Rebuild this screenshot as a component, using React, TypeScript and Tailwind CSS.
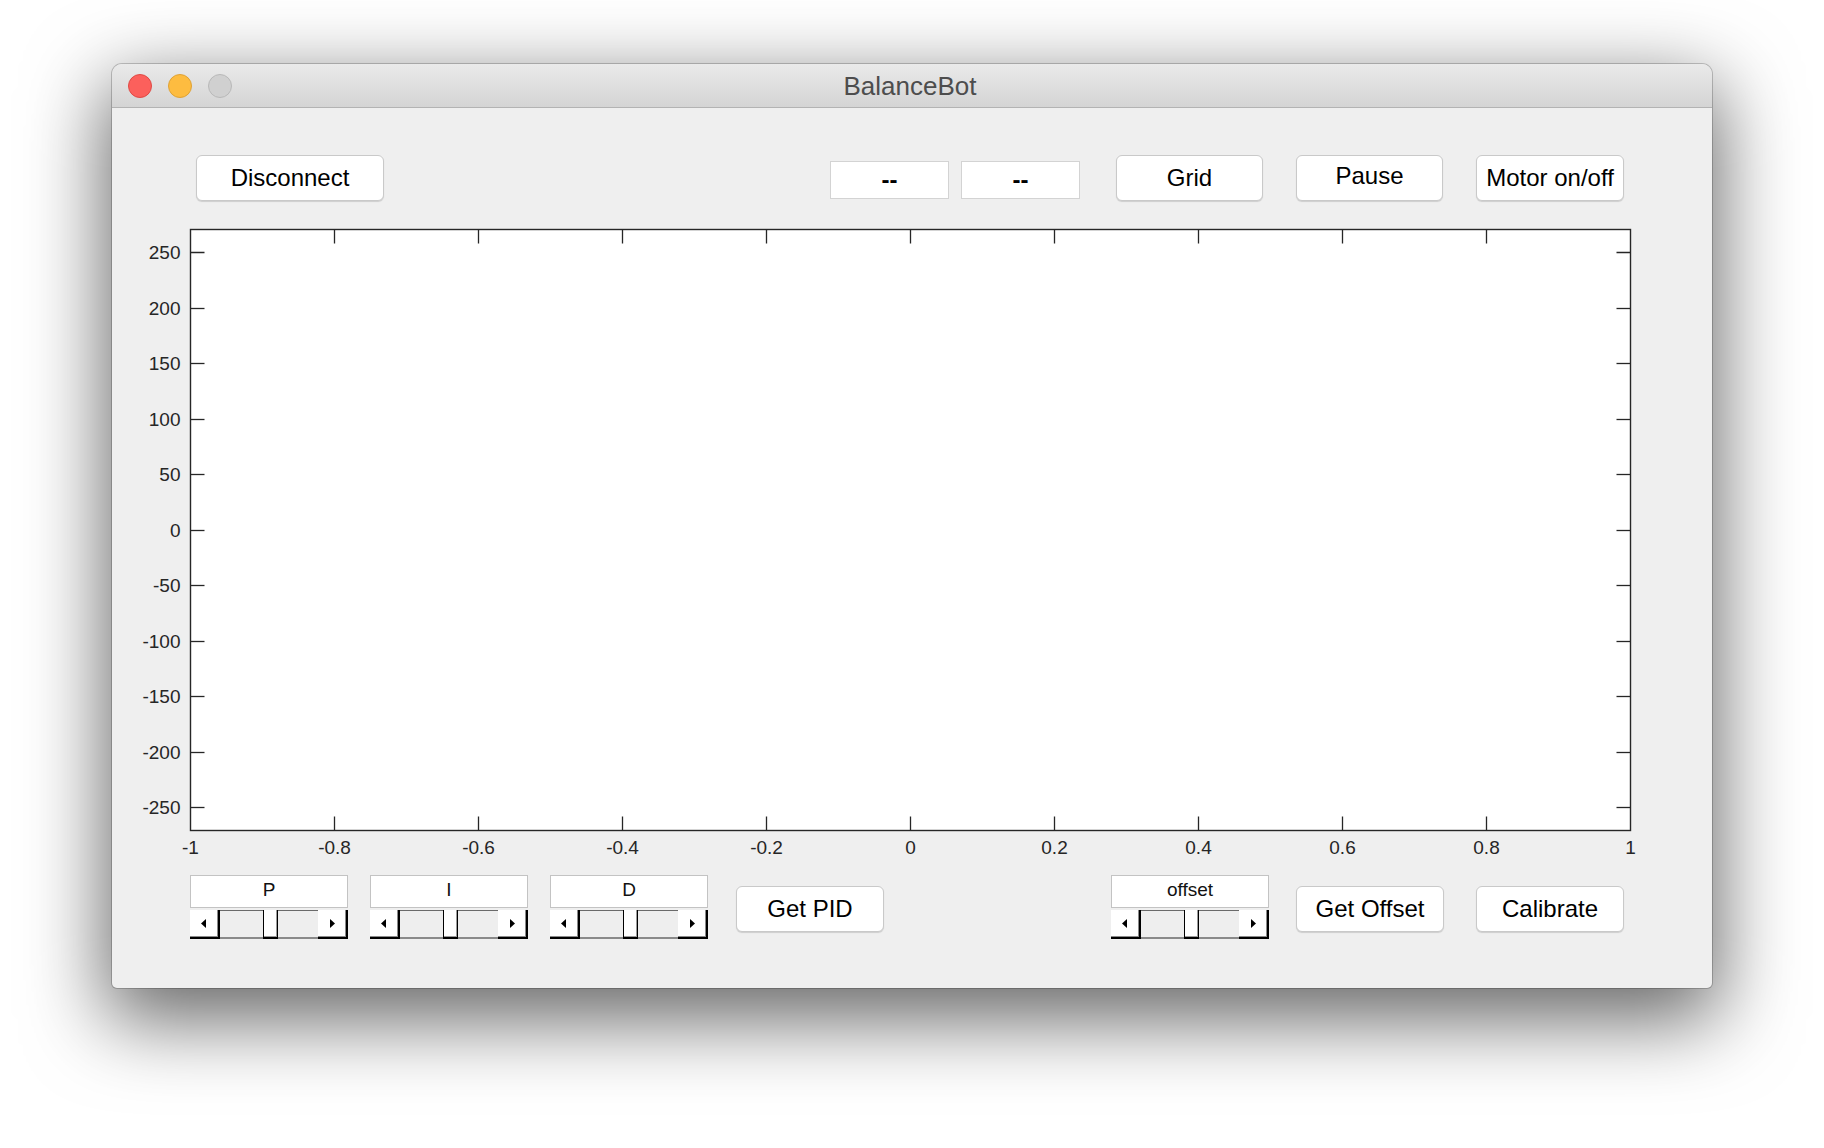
import React from "react";

const FONT = { fontFamily: '"Liberation Sans", Arial, Helvetica, sans-serif' };

function MacButton({ label, width, className = "" }: { label: string; width: string; className?: string }) {
  return (
    <div
      className={`${width} h-[46px] shrink-0 bg-white rounded-[6px] border border-[#c9c9c9] shadow-[0_1px_1px_rgba(0,0,0,0.14)] flex items-center justify-center text-[24px] text-black ${className}`}
    >
      {label}
    </div>
  );
}

function ArrowLeft() {
  return (
    <svg width="5" height="9" viewBox="0 0 5 9">
      <polygon points="5,0 5,9 0,4.5" fill="#000" />
    </svg>
  );
}
function ArrowRight() {
  return (
    <svg width="5" height="9" viewBox="0 0 5 9">
      <polygon points="0,0 0,9 5,4.5" fill="#000" />
    </svg>
  );
}

function SliderGroup({ label, className = "" }: { label: string; className?: string }) {
  return (
    <div className={`w-[158px] shrink-0 flex flex-col ${className}`}>
      <div className="h-[33px] bg-white border border-[#c3c3c3] flex items-center justify-center pb-[3px] text-[19px] text-[#111]">
        {label}
      </div>
      <div className="mt-[2px] h-[29px] flex">
        <div className="w-[30px] bg-white border-r-2 border-b-2 border-black shadow-[inset_-1px_-1px_0_#8a8a8a] flex items-center justify-center pr-[2px]">
          <ArrowLeft />
        </div>
        <div className="w-[43px] bg-[#eeeeee] border-t border-t-[#6a6a6a] border-b-2 border-b-[#8a8a8a]" />
        <div className="w-[15px] bg-white border-l border-r border-b-2 border-black shadow-[inset_-1px_-1px_0_#9a9a9a]" />
        <div className="w-[40px] bg-[#eeeeee] border-t border-t-[#6a6a6a] border-b-2 border-b-[#8a8a8a]" />
        <div className="w-[30px] bg-white border-r-2 border-b-2 border-black shadow-[inset_-1px_-1px_0_#8a8a8a] flex items-center justify-center">
          <ArrowRight />
        </div>
      </div>
    </div>
  );
}

function Chart() {
  const X0 = 78.5;
  const X1 = 1518.5;
  const YT = 9.5;
  const YB = 610.5;
  const xStep = 144;
  const yOf = (v: number) => 309.8 - 1.11 * v;
  const xs = Array.from({ length: 11 }, (_, k) => X0 + xStep * k);
  const xLabels = ["-1", "-0.8", "-0.6", "-0.4", "-0.2", "0", "0.2", "0.4", "0.6", "0.8", "1"];
  const yVals = [250, 200, 150, 100, 50, 0, -50, -100, -150, -200, -250];
  const stroke = "#262626";
  return (
    <svg width="1600" height="646" viewBox="0 0 1600 646" className="block" style={FONT}>
      <rect x={X0} y={YT} width={X1 - X0} height={YB - YT} fill="#fff" stroke={stroke} strokeWidth="1.4" />
      {xs.slice(1, 10).map((x, i) => (
        <g key={"xt" + i}>
          <line x1={x} y1={YB} x2={x} y2={YB - 14} stroke={stroke} strokeWidth="1.3" />
          <line x1={x} y1={YT} x2={x} y2={YT + 14} stroke={stroke} strokeWidth="1.3" />
        </g>
      ))}
      {yVals.map((v) => {
        const y = Math.round(yOf(v)) + 0.5;
        return (
          <g key={"yt" + v}>
            <line x1={X0} y1={y} x2={X0 + 14} y2={y} stroke={stroke} strokeWidth="1.3" />
            <line x1={X1} y1={y} x2={X1 - 14} y2={y} stroke={stroke} strokeWidth="1.3" />
            <text x={68.5} y={y + 6} textAnchor="end" fontSize="19" fill="#262626">
              {v}
            </text>
          </g>
        );
      })}
      {xs.map((x, i) => (
        <text key={"xl" + i} x={x} y={634} textAnchor="middle" fontSize="19" fill="#262626">
          {xLabels[i]}
        </text>
      ))}
    </svg>
  );
}

export default function App() {
  return (
    <div className="w-[1824px] h-[1148px] bg-white pt-[64px] pl-[112px] overflow-hidden" style={FONT}>
      <div className="w-[1600px] h-[924px] rounded-t-[10px] rounded-b-[5px] bg-[#efefef] shadow-[0_0_0_1px_rgba(0,0,0,0.2),0_26px_80px_6px_rgba(0,0,0,0.6)] flex flex-col overflow-hidden">
        {/* Title bar */}
        <div className="h-[44px] shrink-0 bg-linear-to-b from-[#eaeaea] to-[#d4d4d4] border-b border-[#b3b3b3] grid grid-cols-[1fr_auto_1fr] items-center">
          <div className="flex items-center gap-[16px] pl-[16px]">
            <div className="w-[24px] h-[24px] rounded-full bg-[#fc605c] border border-[#de4a45]" />
            <div className="w-[24px] h-[24px] rounded-full bg-[#fdbc40] border border-[#dea236]" />
            <div className="w-[24px] h-[24px] rounded-full bg-[#d0d0d0] border border-[#b8b8b8]" />
          </div>
          <div className="text-[26px] text-[#4d4d4d] pr-[4px] pt-[2px]">BalanceBot</div>
          <div />
        </div>

        {/* Content */}
        <div className="flex-1 flex flex-col">
          {/* Top row */}
          <div className="pt-[47px] flex items-center">
            <MacButton label="Disconnect" width="w-[188px]" className="ml-[84px]" />
            <div className="ml-[446px] w-[119px] h-[38px] mt-[3px] bg-white border border-[#d3d3d3] flex items-center justify-center text-[24px] font-bold text-black">
              --
            </div>
            <div className="ml-[12px] w-[119px] h-[38px] mt-[3px] bg-white border border-[#d3d3d3] flex items-center justify-center text-[24px] font-bold text-black">
              --
            </div>
            <MacButton label="Grid" width="w-[147px]" className="ml-[36px]" />
            <MacButton label="Pause" width="w-[147px]" className="ml-[33px] pb-[4px]" />
            <MacButton label="Motor on/off" width="w-[148px]" className="ml-[33px]" />
          </div>

          {/* Chart */}
          <div className="mt-[19px]">
            <Chart />
          </div>

          {/* Bottom row */}
          <div className="mt-[9px] flex items-start">
            <SliderGroup label="P" className="ml-[78px]" />
            <SliderGroup label="I" className="ml-[22px]" />
            <SliderGroup label="D" className="ml-[22px]" />
            <MacButton label="Get PID" width="w-[148px]" className="ml-[28px] mt-[11px]" />
            <SliderGroup label="offset" className="ml-[227px]" />
            <MacButton label="Get Offset" width="w-[148px]" className="ml-[27px] mt-[11px]" />
            <MacButton label="Calibrate" width="w-[148px]" className="ml-[32px] mt-[11px]" />
          </div>
        </div>
      </div>
    </div>
  );
}
